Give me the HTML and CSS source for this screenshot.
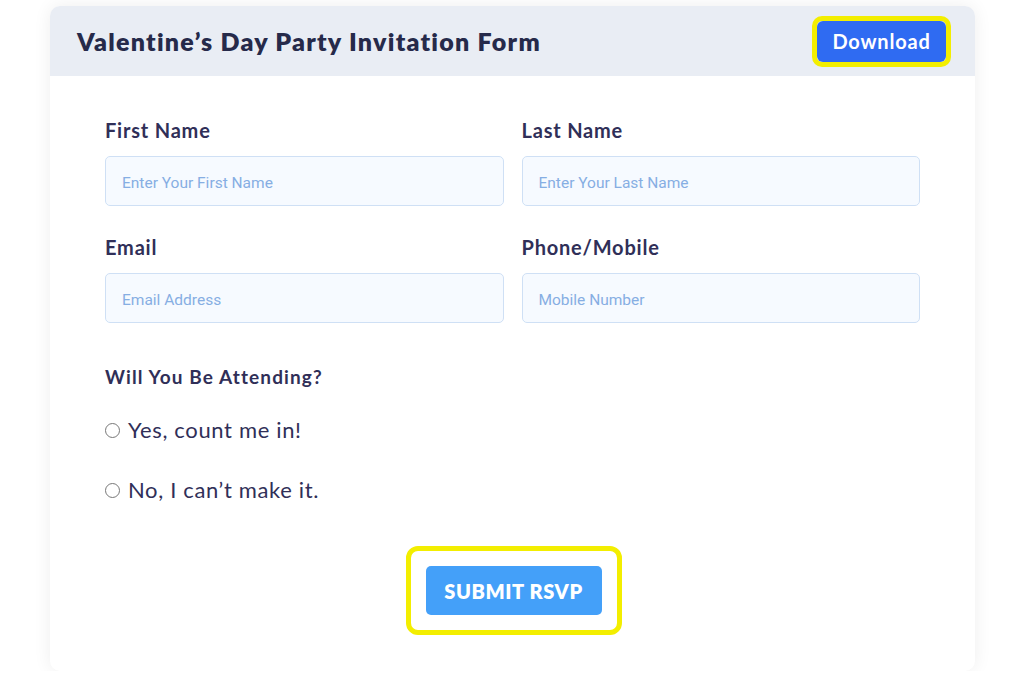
FILE: index.html
```html
<!DOCTYPE html>
<html>
<head>
<meta charset="utf-8">
<link rel="stylesheet" href="styles.css">
</head>
<body>
<div class="page">
  <div class="card">
    <div class="card-header">
      <h1 class="title">Valentine’s Day Party Invitation Form</h1>
      <div class="hl hl-download"><button class="btn-download">Download</button></div>
    </div>
    <div class="card-body">
      <div class="grid">
        <div class="field">
          <label class="label">First Name</label>
          <input class="input" placeholder="Enter Your First Name">
        </div>
        <div class="field">
          <label class="label">Last Name</label>
          <input class="input" placeholder="Enter Your Last Name">
        </div>
        <div class="field">
          <label class="label">Email</label>
          <input class="input" placeholder="Email Address">
        </div>
        <div class="field">
          <label class="label">Phone/Mobile</label>
          <input class="input" placeholder="Mobile Number">
        </div>
      </div>
      <div class="question">Will You Be Attending?</div>
      <label class="radio"><span class="circle"></span>Yes, count me in!</label>
      <label class="radio"><span class="circle"></span>No, I can’t make it.</label>
      <div class="submit-wrap">
        <div class="hl hl-submit"><button class="btn-submit">SUBMIT RSVP</button></div>
      </div>
    </div>
  </div>
</div>
</body>
</html>
```

FILE: styles.css
```css
* { box-sizing: border-box; }
html, body { margin: 0; padding: 0; background: #ffffff; }
body { font-family: "Lato", "Noto Sans", sans-serif; color: #2d2c55; }
.page { padding: 6px 0 0 50px; }
.card {
  width: 925px;
  height: 665px;
  background: #ffffff;
  border-radius: 10px;
  box-shadow: 0 0 18px rgba(0,0,0,0.07);
  overflow: hidden;
}
.card-header {
  height: 70px;
  background: #e9edf4;
  display: flex;
  align-items: center;
  justify-content: space-between;
  padding: 0 24px 0 27px;
}
.title {
  margin: 0;
  font-size: 25px;
  font-weight: 800;
  color: #262a4a;
  letter-spacing: 1.25px;
}
.hl {
  border: 5px solid #f3ee00;
  border-radius: 10px;
  display: inline-flex;
}
.btn-download {
  border: none;
  background: #2f6bf2;
  color: #fff;
  font-family: inherit;
  font-weight: 700;
  font-size: 20px;
  letter-spacing: 0.8px;
  width: 129px;
  height: 41px;
  border-radius: 6px;
  margin: 0;
}
.card-body { padding: 42px 55px 0 55px; }
.grid {
  display: grid;
  grid-template-columns: 1fr 1fr;
  column-gap: 18px;
  row-gap: 29px;
}
.field { display: flex; flex-direction: column; }
.label {
  font-size: 20px;
  font-weight: 700;
  color: #302f58;
  line-height: 24px;
  letter-spacing: 0.8px;
  margin-bottom: 14px;
}
.input {
  height: 50px;
  border: 1px solid #cfe0f5;
  background: #f6faff;
  border-radius: 5px;
  padding: 4px 16px 0 16px;
  font-family: "Roboto", "Inter", sans-serif;
  font-size: 15.5px;
  color: #333;
  outline: none;
}
.input::placeholder { color: #86aee3; }
.question {
  margin-top: 42px;
  font-size: 19px;
  font-weight: 700;
  color: #302f58;
  line-height: 24px;
  letter-spacing: 1.1px;
}
.radio {
  display: flex;
  align-items: center;
  font-size: 22px;
  color: #302f58;
  line-height: 28px;
  letter-spacing: 0.65px;
  margin-top: 27px;
}
.radio + .radio { margin-top: 32px; }
.circle {
  width: 15px;
  height: 15px;
  border: 1px solid #777;
  border-radius: 50%;
  margin-right: 8px;
  background: #fff;
}
.submit-wrap {
  display: flex;
  justify-content: center;
  margin-top: 42px;
  padding-left: 2px;
}
.hl-submit {
  padding: 15px 15px;
  border-width: 5px;
  border-radius: 12px;
}
.btn-submit {
  border: none;
  background: #44a0f9;
  color: #fff;
  font-family: inherit;
  font-weight: 800;
  font-size: 20px;
  letter-spacing: 0.6px;
  width: 176px;
  height: 49px;
  border-radius: 5px;
}
```
